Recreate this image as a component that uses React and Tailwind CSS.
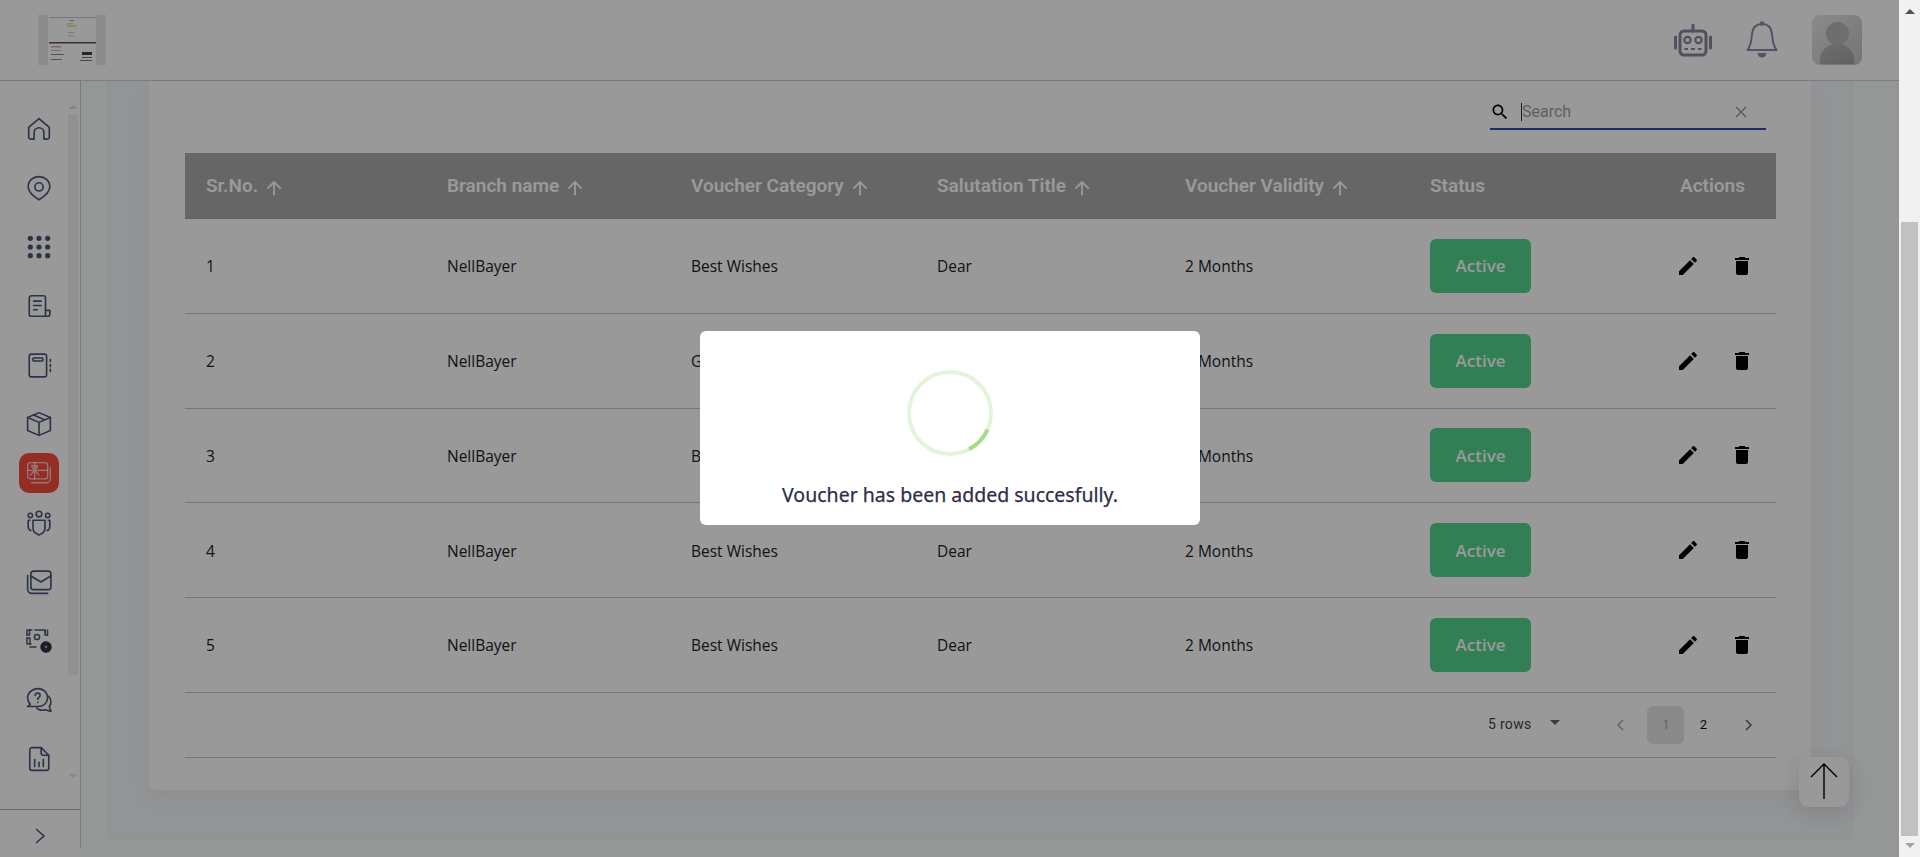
import React from "react";

const rows = [
  { id: 1, category: "Best Wishes", title: "Dear" },
  { id: 2, category: "Get Well", title: "Dear" },
  { id: 3, category: "Best Wishes", title: "Dear" },
  { id: 4, category: "Best Wishes", title: "Dear" },
  { id: 5, category: "Best Wishes", title: "Dear" },
];

const gridCols = "grid grid-cols-[262px_244px_246px_248px_245px_200px_1fr]";

function Ico({ children, size = 24, view = "0 0 24 24", width = 1.5 }) {
  return (
    <svg width={size} height={size} viewBox={view} fill="none" stroke="#485575" strokeWidth={width} strokeLinecap="round" strokeLinejoin="round">
      {children}
    </svg>
  );
}

function ArrowUp() {
  return (
    <svg width="22" height="22" viewBox="0 0 24 24" fill="#ffffff" className="mt-[2px] shrink-0">
      <path d="M4 12l1.41 1.41L11 7.83V20h2V7.83l5.58 5.59L20 12l-8-8-8 8z" />
    </svg>
  );
}

function NavIcons() {
  return [
    <Ico key="home" size={26}>
      <path d="M2.5 10.5 L12 2.5 L21.5 10.5 V19.5 a1.8 1.8 0 0 1-1.8 1.8 h-3.2 v-6 a4.5 4.5 0 0 0-9 0 v6 H4.3 a1.8 1.8 0 0 1-1.8-1.8 Z" />
    </Ico>,
    <Ico key="pin" size={26}>
      <path d="M12 1.5 c5.4 0 10 3.6 10 9.4 c0 4.4-5.2 9-10 12 c-4.8-3-10-7.6-10-12 c0-5.8 4.6-9.4 10-9.4 z" />
      <circle cx="12" cy="11" r="3.8" />
    </Ico>,
    <svg key="dots" width="26" height="26" viewBox="0 0 26 26" fill="#485575">
      {[4.3, 13, 21.7].map((y) =>
        [4.3, 13, 21.7].map((x) => <circle key={x + "-" + y} cx={x} cy={y} r="2.6" />)
      )}
    </svg>,
    <Ico key="doc" size={26}>
      <path d="M18 20.5 V4.5 a2 2 0 0 0-2-2 H5 a2 2 0 0 0-2 2 V19.5 a2 2 0 0 0 2 2 H20 a2 2 0 0 0 2-2 v-3.5 h-4" />
      <path d="M7 7.5 h7 M7 11.5 h7 M7 15.5 h3.5" />
    </Ico>,
    <Ico key="book" size={26}>
      <rect x="3" y="2" width="16" height="21" rx="2" />
      <rect x="6.5" y="5.5" width="9" height="2.8" rx=".5" />
      <path d="M22.5 7 v2 M22.5 11.5 v2 M22.5 16 v2" />
    </Ico>,
    <Ico key="box" size={26}>
      <path d="M12 1.5 L22.5 6 V18 L12 22.5 L1.5 18 V6 Z" />
      <path d="M1.5 6 L12 10.5 L22.5 6 M12 10.5 V22.5 M7 3.7 L17 8" />
    </Ico>,
    <svg key="voucher" width="26" height="26" viewBox="0 0 24 24" fill="none" stroke="#ffffff" strokeOpacity=".7" strokeWidth="1.2" strokeLinecap="round" strokeLinejoin="round">
      <rect x="1.5" y="2.5" width="18.5" height="15" rx="2.5" />
      <path d="M1.5 9.5 H20 M8 2.5 V17.5 M8 9.5 L4 14 M8 9.5 L12 14 M8 9 C5 7 4.5 4.5 6.5 5 C7.5 5.5 8 7.5 8 9 C8 7.5 8.8 5.5 9.8 5 C11.5 4.5 11 7 8 9" />
      <path d="M22.5 7 V17.5 a3.5 3.5 0 0 1-3.5 3.5 H5" />
    </svg>,
    <Ico key="team" size={26}>
      <circle cx="12" cy="3.8" r="2.6" />
      <circle cx="4" cy="5" r="2" />
      <circle cx="20" cy="5" r="2" />
      <path d="M6.5 9.5 H17.5 V17 C17.5 20 14.5 22 12 23 C9.5 22 6.5 20 6.5 17 Z" />
      <path d="M3.5 9.5 H2 V15 C2 17 3 18.5 4.5 19 M20.5 9.5 H22 V15 C22 17 21 18.5 19.5 19" />
    </Ico>,
    <Ico key="mail" size={26}>
      <rect x="4.5" y="2" width="18.5" height="17" rx="2.5" />
      <path d="M4.5 6.5 L13.7 12 L23 6.5" />
      <path d="M1.5 6 V18.5 a4 4 0 0 0 4 4 H20" />
    </Ico>,
    <svg key="cash" width="28" height="28" viewBox="0 0 28 28" fill="none" stroke="#485575" strokeWidth="1.5" strokeLinecap="round" strokeLinejoin="round" className="ml-[1px]">
      <path d="M2 8 V3 H7 M10 3 H20 V5 M22.5 3 V8 M2 11 V17 H6 M5 20 H11" />
      <path d="M2 8 H4.5 V3 M2 11 H5 V17 M20 3 V8 H22.5" />
      <circle cx="12" cy="10" r="2.6" />
      <circle cx="21" cy="20" r="4.4" fill="#2b3346" stroke="#2b3346" strokeDasharray="2.4 1.1" strokeWidth="2.6" />
      <circle cx="21" cy="20" r="1.4" fill="#999999" stroke="none" />
    </svg>,
    <Ico key="help" size={26}>
      <path d="M11 1.5 C5.5 1.5 1.5 5.5 1.5 10 C1.5 12.5 2.5 14.5 4 16 L1.5 18 H11 C16.5 18 20 14.5 20 10 C20 5.5 16.5 1.5 11 1.5 Z" />
      <path d="M8.5 7.8 C8.5 4.8 13 4.8 13 7.8 C13 9.5 10.8 9.8 10.8 11.5 M10.8 14.2 V14.3" />
      <path d="M21 8.5 C22.5 10 23 11.5 23 13.5 C23 15.5 22.3 17 21.5 18 L23 22.5 L17.5 21 C15.5 22 12 21.5 10 19.5" />
    </Ico>,
    <Ico key="report" size={26}>
      <path d="M3.5 3.5 a2 2 0 0 1 2-2 H14 L21 8.5 V20.5 a2 2 0 0 1-2 2 H5.5 a2 2 0 0 1-2-2 Z" />
      <path d="M14 1.5 V6.5 a2 2 0 0 0 2 2 H21 M8 19 V12.5 M12 19 V15 M16 19 V12.5" />
    </Ico>,
  ];
}

function Sidebar() {
  const icons = NavIcons();
  return (
    <aside className="relative self-start w-[81px] h-[767px] shrink-0 border-r border-[#c6ced6] flex flex-col">
      <div className="flex-1 pt-[18px] pr-[3px]">
        {icons.map((icon, i) =>
          i === 6 ? (
            <div key={i} className="ml-[19px] w-10 h-10 rounded-[10px] bg-[#f94b42] flex items-center justify-center">
              {icon}
            </div>
          ) : (
            <div key={i} className="h-[59px] flex items-center justify-center">
              {icon}
            </div>
          )
        )}
      </div>

      {/* sidebar scrollbar */}
      <div className="absolute left-[68px] top-[24px] w-[10px] h-[681px] flex flex-col items-center">
        <div className="w-0 h-0 border-x-[5px] border-x-transparent border-b-[4px] border-b-[#e2e2e2]" />
        <div className="mt-[5px] w-[10px] h-[561px] bg-[#f1f1f1]" />
        <div className="mt-[99px] w-0 h-0 border-x-[5px] border-x-transparent border-t-[4px] border-t-[#e2e2e2]" />
      </div>

      <div className="h-[39px] border-t border-[#b8b8b8] flex items-center justify-center pt-[14px]">
        <svg width="14" height="18" viewBox="0 0 14 18" fill="none" stroke="#485575" strokeWidth="1.6">
          <path d="M3 2 L11 9 L3 16" />
        </svg>
      </div>
    </aside>
  );
}

function Header() {
  return (
    <header className="h-[81px] border-b border-[#cbd2d9] flex items-center pl-[38px] pr-[37px]">
      <svg width="68" height="50" viewBox="0 0 68 50" className="blur-[0.7px]">
        <rect width="68" height="50" fill="#ffffff" />
        <rect width="10" height="50" fill="#e9e9e9" />
        <rect x="58" width="10" height="50" fill="#e9e9e9" />
        <rect x="11" y="2" width="47" height="1" fill="#c9c0e2" />
        <rect x="31" y="5" width="5" height="1" fill="#aaa" />
        <rect x="29" y="8" width="6" height="1.5" fill="#d3dfee" />
        <rect x="29" y="10" width="10" height="2" fill="#f3e77a" />
        <rect x="30" y="17" width="7" height="1" fill="#ccc" />
        <rect x="30" y="20" width="8" height="2" fill="#e4ebf3" />
        <rect x="11" y="27" width="47" height="1.5" fill="#555" />
        <rect x="13" y="31" width="10" height="1.5" fill="#e3aaaa" />
        <rect x="13" y="35" width="10" height="1" fill="#bbb" />
        <rect x="13" y="39" width="13" height="1" fill="#888" />
        <rect x="13" y="44" width="11" height="1" fill="#888" />
        <rect x="44" y="37" width="10" height="3" fill="#444" />
        <rect x="44" y="42" width="10" height="1" fill="#777" />
        <rect x="42" y="45" width="12" height="1" fill="#777" />
      </svg>

      <div className="ml-auto flex items-center">
        <svg width="38" height="34" viewBox="0 0 38 34" fill="none" stroke="#858899" strokeWidth="2.2" className="mb-[-2px]">
          <rect x="6" y="7" width="26" height="24" rx="4" strokeWidth="3" />
          <path d="M19 1 V7" strokeWidth="3" strokeLinecap="round" />
          <path d="M1.5 13 V24 M36.5 13 V24" strokeWidth="3" strokeLinecap="round" />
          <circle cx="13.5" cy="16" r="3.2" />
          <circle cx="24.5" cy="16" r="3.2" />
          <path d="M10.5 25 H14 M17 25 H21 M24 25 H27.5" />
        </svg>
        <svg width="32" height="38" viewBox="0 0 32 38" fill="none" stroke="#858ea6" strokeWidth="2" className="ml-[34px]">
          <path d="M16 3 C9 3 6.5 8 6 13 C5.5 20 4.5 25 1.5 29 H30.5 C27.5 25 26.5 20 26 13 C25.5 8 23 3 16 3 Z" strokeLinejoin="round" />
          <circle cx="16" cy="2.5" r="1.2" fill="#858ea6" />
          <path d="M11.5 32 H20.5 C20 38 12 38 11.5 32 Z" fill="#858ea6" stroke="none" />
        </svg>
        <div className="ml-[34px] w-[50px] h-[50px] rounded-lg overflow-hidden bg-gradient-to-br from-[#e8e8e8] to-[#c2c2c2] flex flex-col items-center">
          <div className="mt-[7px] w-[23px] h-[23px] rounded-full bg-[#b8b8b8]" />
          <div className="mt-[-1px] w-[34px] h-[20px] rounded-t-[16px] bg-gradient-to-br from-[#b8b8b8] to-[#a2a2a2]" />
        </div>
      </div>
    </header>
  );
}

function Search() {
  return (
    <div className="flex justify-end pr-[10px] pt-[20px] mb-[23px]">
      <div className="w-[276px] h-[29px] border-b-2 border-[#3349b0] flex items-center pb-[6px]">
        <svg width="20" height="20" viewBox="0 0 24 24" fill="#000000">
          <path d="M15.5 14h-.79l-.28-.27C15.41 12.59 16 11.11 16 9.5 16 5.91 13.09 3 9.5 3S3 5.91 3 9.5 5.91 16 9.5 16c1.61 0 3.09-.59 4.23-1.57l.27.28v.79l5 4.99L20.49 19l-4.99-5zm-6 0C7.01 14 5 11.99 5 9.5S7.01 5 9.5 5 14 7.01 14 9.5 11.99 14 9.5 14z" />
        </svg>
        <span className="ml-[11px] h-[18px] border-l border-[#333]" />
        <span className="font-['Roboto',sans-serif] text-[16px] text-[#a0a0a0] leading-none">Search</span>
        <svg width="12" height="12" viewBox="0 0 12 12" stroke="#8a8a8a" strokeWidth="1.1" className="ml-auto mr-[19px]">
          <path d="M1 1 L11 11 M11 1 L1 11" />
        </svg>
      </div>
    </div>
  );
}

function SortHead({ label }) {
  return (
    <div className="flex items-center gap-[5px]">
      <span>{label}</span>
      <ArrowUp />
    </div>
  );
}

function VoucherTable() {
  return (
    <div className="font-['Open_Sans',sans-serif] text-[15.5px] text-[#222222]">
      <div className={`${gridCols} items-center h-[66px] pt-[1px] bg-[#aaaaaa] text-white text-[19px] font-semibold font-['Roboto',sans-serif]`}>
        <div className="pl-[21px]"><SortHead label="Sr.No." /></div>
        <SortHead label="Branch name" />
        <SortHead label="Voucher Category" />
        <SortHead label="Salutation Title" />
        <SortHead label="Voucher Validity" />
        <div>Status</div>
        <div className="text-right pr-[31px]">Actions</div>
      </div>

      {rows.map((row) => (
        <div key={row.id} className={`${gridCols} items-center h-[94.8px] border-b border-[#c8c8c8]`}>
          <div className="pl-[21px] pt-[2px]">{row.id}</div>
          <div className="pt-[2px]">NellBayer</div>
          <div className="pt-[2px]">{row.category}</div>
          <div className="pt-[2px]">{row.title}</div>
          <div className="pt-[2px]">2 Months</div>
          <div>
            <div className="w-[101px] h-[54px] rounded-md bg-[#54d48f] text-white text-[17px] font-semibold flex items-center justify-center">
              Active
            </div>
          </div>
          <div className="flex justify-end gap-[30px] pr-[22px]">
            <svg width="24" height="24" viewBox="0 0 24 24" fill="#000000">
              <path d="M3 17.25V21h3.75L17.81 9.94l-3.75-3.75L3 17.25zM20.71 7.04c.39-.39.39-1.02 0-1.41l-2.34-2.34c-.39-.39-1.02-.39-1.41 0l-1.83 1.83 3.75 3.75 1.83-1.83z" />
            </svg>
            <svg width="24" height="24" viewBox="0 0 24 24" fill="#000000">
              <path d="M6 19c0 1.1.9 2 2 2h8c1.1 0 2-.9 2-2V7H6v12zM19 4h-3.5l-1-1h-5l-1 1H5v2h14V4z" />
            </svg>
          </div>
        </div>
      ))}

      <div className="h-[65px] border-b border-[#c8c8c8] flex items-center font-['Roboto',sans-serif] pl-[1303px]">
        <span className="text-[14px] tracking-[0.3px] text-[#444]">5 rows</span>
        <span className="ml-[19px] mb-[5px] w-0 h-0 border-x-[5px] border-x-transparent border-t-[5px] border-t-[#666]" />
        <svg width="10" height="14" viewBox="0 0 10 14" fill="none" stroke="#aaa" strokeWidth="1.6" className="ml-[55px]">
          <path d="M8 2 L3 7 L8 12" />
        </svg>
        <div className="ml-[22px] w-[37px] h-[38px] rounded-md bg-[#e6e6e6] text-[#a6a6a6] text-[13px] flex items-center justify-center">1</div>
        <div className="w-[38px] text-center text-[13px] text-[#111]">2</div>
        <svg width="10" height="14" viewBox="0 0 10 14" fill="none" stroke="#666" strokeWidth="1.6" className="ml-[22px]">
          <path d="M2 2 L7 7 L2 12" />
        </svg>
      </div>
    </div>
  );
}

export default function App() {
  return (
    <div className="h-[857px] w-[1920px] flex overflow-hidden bg-white">
      <div className="relative w-[1899px] h-full">
        <Header />
        <div className="flex h-[776px]">
          <Sidebar />
          <main className="flex-1 bg-[#f9fafb] pl-[26px] pr-[46px]">
            <div className="h-[759px] bg-[#f5f7f9] border-x border-b border-[#f1f2f4] rounded-b-lg px-[41px]">
              <div className="h-[709px] bg-white rounded-b-md pl-[36px] pr-[35px] shadow-[0_8px_24px_rgba(50,60,80,0.05)]">
                <Search />
                <VoucherTable />
              </div>
            </div>
          </main>
        </div>

        {/* back to top */}
        <div className="fixed left-[1799px] top-[757px] w-[50px] h-[50px] rounded-[10px] bg-white shadow-[0_6px_24px_rgba(60,70,90,0.18)] flex items-center justify-center">
          <svg width="30" height="38" viewBox="0 0 30 38" fill="none" stroke="#000000" strokeWidth="1.4">
            <path d="M15 1 V36 M2 14 L15 1 L28 14" />
          </svg>
        </div>

        {/* modal overlay */}
        <div className="fixed top-0 left-0 w-[1899px] h-[857px] bg-black/40 flex items-center justify-center pl-[1px] pb-[2px]">
          <div className="w-[500px] h-[194px] bg-white rounded-[6px] flex flex-col items-center pt-[39px]">
            <svg width="86" height="86" viewBox="0 0 86 86" fill="none">
              <circle cx="43" cy="43" r="41" stroke="#a5dc86" strokeOpacity=".3" strokeWidth="4" />
              <path d="M80.5 59.5 A41 41 0 0 1 62 79.3" stroke="#a5dc86" strokeWidth="4" />
            </svg>
            <p className="mt-[25px] font-['Noto_Sans',sans-serif] text-[19.5px] font-normal leading-[28px] text-[#2d2f45] [-webkit-text-stroke:0.25px_#2d2f45]">
              Voucher has been added succesfully.
            </p>
          </div>
        </div>
      </div>

      {/* page scrollbar */}
      <div className="w-[21px] h-full bg-[#f1f1f1] flex flex-col items-center">
        <div className="mt-[9px] w-0 h-0 border-x-[5px] border-x-transparent border-b-[5px] border-b-[#505050]" />
        <div className="mt-[208px] w-[17px] h-[614px] bg-[#c1c1c1]" />
        <div className="mt-[7px] w-0 h-0 border-x-[5px] border-x-transparent border-t-[5px] border-t-[#a3a3a3]" />
      </div>
    </div>
  );
}
